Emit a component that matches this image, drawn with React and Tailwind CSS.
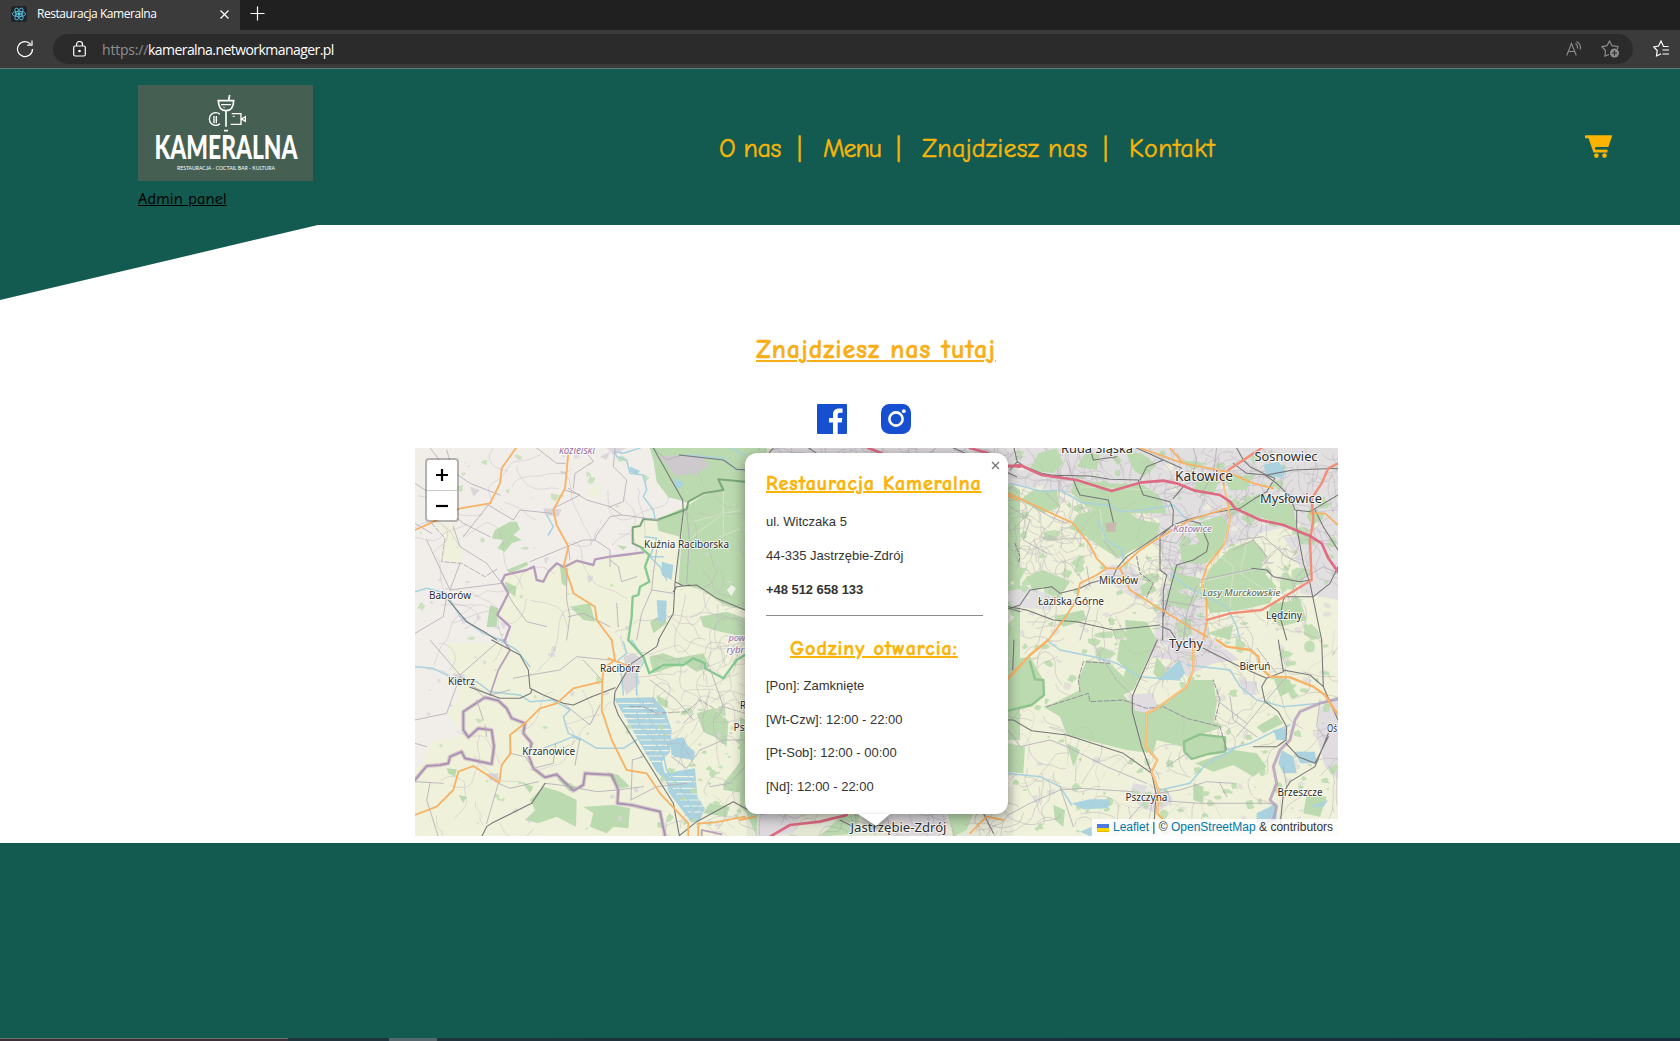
import React from "react";

const comic = "font-['Comic_Sans_MS','Comic_Neue','Open_Sans',sans-serif]";

/* ---------- seeded texture for fields, lanes and small woods ---------- */
function makeRandom(seed) {
  let s = seed;
  return () => {
    s = (s * 1664525 + 1013904223) % 4294967296;
    return s / 4294967296;
  };
}

function lanes(seed, count, x0, y0, w, h, step) {
  const r = makeRandom(seed);
  let d = "";
  for (let i = 0; i < count; i++) {
    let x = x0 + r() * w;
    let y = y0 + r() * h;
    let a = r() * 6.28;
    d += `M${x.toFixed(1)} ${y.toFixed(1)}`;
    const n = 4 + Math.floor(r() * 6);
    for (let k = 0; k < n; k++) {
      a += (r() - 0.5) * 2;
      const nx = x + Math.cos(a) * step * (0.5 + r());
      const ny = y + Math.sin(a) * step * (0.5 + r());
      d += `Q${x.toFixed(1)} ${y.toFixed(1)} ${((x + nx) / 2).toFixed(1)} ${((y + ny) / 2).toFixed(1)}`;
      x = nx;
      y = ny;
    }
  }
  return d;
}

function patches(seed, count, x0, y0, w, h, size) {
  const r = makeRandom(seed);
  let d = "";
  for (let i = 0; i < count; i++) {
    const cx = x0 + r() * w;
    const cy = y0 + r() * h;
    const R = size * (0.3 + r());
    const tilt = 0.4 + r() * 0.8;
    for (let k = 0; k < 9; k++) {
      const a = (k / 9) * 6.28;
      const q = R * (0.45 + r() * 0.75);
      d += `${k ? "L" : "M"}${(cx + Math.cos(a) * q).toFixed(1)} ${(cy + Math.sin(a) * q * tilt).toFixed(1)}`;
    }
    d += "Z";
  }
  return d;
}

const NW = "translate(410 440) scale(.33333)";
const SW = "translate(410 640) scale(.33333)";
const MID = "translate(740 440) scale(.33333)";
const NE = "translate(1000 440) scale(.33333)";
const SE = "translate(1000 640) scale(.33333)";

const labels = [
  ["koźielski", 577, 453.5, 36, 10, "i"],
  ["Kuźnia Raciborska", 686.5, 548, 85, 10],
  ["Baborów", 450, 598.5, 42, 10],
  ["Kietrz", 461.5, 685, 27, 10],
  ["Racibórz", 620, 672, 40, 10],
  ["Krzanowice", 548.7, 755, 53, 10],
  ["pow", 737, 641, 17, 9.5, "i"],
  ["rybr", 735.5, 653, 18, 9.5, "i"],
  ["R", 743, 709, 6, 10],
  ["Ps", 739, 731, 11, 10],
  ["Jastrzębie-Zdrój", 898.5, 832, 96, 12.5],
  ["Ruda Śląska", 1097, 453, 72, 12.5],
  ["Katowice", 1204, 481, 58, 13.5],
  ["Sosnowiec", 1286, 460.5, 63, 12.5],
  ["Mysłowice", 1291, 502.5, 62, 12.5],
  ["Katowice", 1192.5, 532, 39, 9.5, "i"],
  ["Mikołów", 1118.6, 583.5, 39, 10],
  ["Łaziska Górne", 1071, 605, 66, 10],
  ["Lasy Murckowskie", 1241.5, 596, 78, 9.5, "g"],
  ["Lędziny", 1284, 619, 36, 10],
  ["Tychy", 1186, 647.5, 34, 13],
  ["Bieruń", 1255, 669.5, 31, 10],
  ["Oś", 1332, 732, 10, 10],
  ["Pszczyna", 1146.5, 801, 42, 10],
  ["Brzeszcze", 1300, 796, 45, 10],
];

function MapDrawing() {
  return (
    <svg className="block h-full w-full" viewBox="415 448 923 388" fill="none" strokeLinejoin="round" strokeLinecap="round">
      <rect x="415" y="448" width="923" height="388" fill="#eff1da" />

      {/* land cover */}
      <g transform={NW}>
        <path fill="#f1eee9" d="M0 0H900L830 190 740 240 700 240 668 260 665 300 700 335 600 350 550 370 490 362 440 375 385 425 370 385 285 405 275 430 295 465 262 530 295 560 300 610H0Z" />
        <path fill="#eff1da" d="M80 250L130 255 155 340 150 370 95 360 105 290ZM540 145L575 135 570 165 540 172Z" />
        <path fill="#bbdaaf" d="M718 20H1010V125L925 118 940 150 880 160 830 188 800 178 775 172 740 125 730 60ZM740 240L820 203 800 425 815 292 745 272ZM822 205L880 165 940 150 925 118 1010 125V512L940 495 880 450 805 432Z" />
        <path fill="#cdc9cd" d="M745 48L870 45 900 75 850 108 845 98 800 110 760 62Z" />
        <path fill="#bbdaaf" d="M255 270L300 245 320 245 330 268 310 285 335 300 305 310 285 335 262 325 280 300 245 295ZM240 495L265 505 260 560 230 562ZM285 425L320 440 315 470 290 450ZM450 380L475 385 470 440 455 430ZM720 545L760 520 770 550 730 580ZM870 530L950 515 1005 535V590L930 575 880 560ZM620 315L650 320 640 330ZM480 500L540 490 555 545 520 540ZM290 390L350 365 355 375 300 400Z" />
        <path fill="#aad3df" d="M755 365L790 375 785 420 755 405ZM740 480L770 482 768 540 745 550ZM790 115L825 130 800 150ZM660 80L690 92 680 105 660 95Z" />
        <path fill="#dad6da" d="M180 140L210 150 190 170ZM400 205L455 208 445 230 405 225ZM590 24L650 24 610 45ZM570 50L600 35 590 60Z" />
        <path fill="#fbf8f5" opacity=".8" d="M950 450L965 435 978 445 965 468Z" />
        <path stroke="#d3e6c6" strokeWidth="3" d="M940 155V280M835 300L940 220 1000 210M850 245L940 220M930 290L1005 260" />
      </g>
      <g transform={SW}>
        <path fill="#f1eee9" d="M0 0H110L130 105 150 170 110 220 165 280 60 310 40 370 0 410Z" />
        <path fill="#bbdaaf" d="M360 480L400 440 450 455 500 480 498 560 440 530 385 550 345 540 375 510ZM335 425L370 440 360 460ZM440 415L500 440 480 455ZM520 500L610 495 660 505 655 565 610 560 590 580 540 560 550 520ZM590 395L625 405 660 440 630 445 605 420ZM860 220L910 205 955 245 950 320 915 290 880 275ZM718 50L760 40 800 55 880 40 900 80 860 95 820 70 730 100ZM940 430L1005 350V460L940 450ZM900 490L960 500 950 530 880 520ZM110 385L140 388 135 410 115 400ZM145 465L170 470 160 490ZM740 165L775 185 770 205 745 190Z" />
        <path fill="#aad3df" d="M612 175L730 172 765 210 785 270 780 335 755 365 765 400 855 385 862 470 885 505 870 540 845 548 775 455 770 425 740 395ZM800 290L855 335 850 360 790 350ZM780 300L820 292 850 350 785 345Z" />
        <path stroke="#eef4e4" strokeWidth="3.500" strokeDasharray="70 8 40 5" d="M625 190H730M640 205H740M640 220H755M645 236H765M655 252H775M665 268H780M675 284H782M690 300H780M700 316H778M708 332H775M715 348H768M725 364H752M780 410H850M775 425H855M790 445H855M800 462H860M810 480H865M820 498H880M835 516H875" />
        <path fill="#d9d6d9" d="M640 50L670 40 700 60 680 90 690 130 650 165 630 120 650 90ZM230 400L265 400 265 430 240 420ZM130 100L165 105 155 140 130 130Z" />
      </g>
      <g transform={MID}>
        <rect x="20" y="20" width="800" height="1190" fill="#e4e6d4" />
        <path fill="#bbdaaf" d="M0 20H80V400L0 390ZM0 830L60 870 50 1190 20 1120 0 1100ZM795 120L840 150V900H790ZM300 1130L360 1120 350 1180 240 1190ZM620 1110L700 1120 680 1170 640 1190Z" />
        <path fill="#dcd8dc" d="M100 20H800V60H100ZM60 1120L180 1130 160 1180 50 1190ZM420 1120H620V1190H440Z" />
      </g>
      <g transform={NE}>
        <path fill="#e2dfe0" d="M0 20H1014V330L960 320 900 250 780 280 690 320 540 400 460 300 480 240 300 170 0 130ZM480 300L610 300 620 420 500 420ZM300 370L400 380 450 460 410 480 330 430ZM490 430L620 470 620 600H460ZM850 290H1014V480L900 460 900 380ZM0 460L90 440 180 480 150 510 40 500Z" />
      </g>
      <g transform={SE}>
        <path fill="#e0dcdf" d="M430 0H640L720 60 640 70 560 110 520 60 440 50ZM380 165L460 160 475 210 410 220ZM720 120L770 125 770 165 730 165ZM960 200L1014 180V420L975 380 950 290ZM400 430L500 450 520 480 470 520 420 500 390 460ZM280 20L340 30 330 70 290 60Z" />
      </g>

      {/* small woods and settlements */}
      <path fill="#dad6da" opacity=".6" d={patches(83, 130, 1008, 450, 328, 384, 4.500)} />
      <path fill="#f0efdd" opacity=".8" d={patches(44, 120, 1008, 450, 328, 384, 5)} />
      <path fill="#c3deb3" opacity=".8" d={patches(7, 60, 420, 452, 325, 378, 3.500)} />
      <path fill="#bddcb0" opacity=".9" d={patches(31, 40, 650, 700, 95, 134, 4)} />
      <path fill="#bddcb0" opacity=".9" d={patches(19, 240, 1008, 450, 328, 384, 4.500) + patches(77, 50, 1010, 455, 326, 200, 9)} />
      <path fill="#d9d4dc" opacity=".75" d={patches(57, 60, 420, 455, 325, 378, 3)} />
      <g stroke="#b3acb6" strokeWidth=".6" opacity=".75">
        <path d={lanes(23, 190, 1008, 448, 330, 388, 8)} />
        <path d={lanes(29, 230, 1010, 448, 328, 120, 6)} />
        <path d={lanes(91, 60, 1160, 560, 60, 90, 6)} />
      </g>

      {/* large woods of the eastern part */}
      <g transform={NE}>
        <path fill="#bbdaaf" d="M115 40L170 25 190 70 160 100 90 90ZM260 35L300 45 290 90 230 80ZM220 120L330 130 430 135 480 170 500 220 400 220 260 200 215 160ZM100 150L170 150 180 200 130 220 60 180ZM380 40L425 40 470 75 430 110 400 90ZM280 210L360 200 420 240 480 250 470 300 400 330 355 355 300 320 260 290 210 265 230 225ZM575 255L665 225 685 260 665 320 620 370 545 370 540 320 600 310ZM625 390L690 325 760 300 790 330 785 390 830 440 810 490 720 510 630 520 605 450ZM700 200L780 160 880 200 890 270 790 235ZM525 400L600 415 600 440 540 450 505 420ZM80 410L130 390 210 425 190 455 130 440 100 455ZM160 530L250 510 260 540 190 560ZM500 450L590 470 560 510 500 490ZM420 440L450 420 470 450 430 470ZM820 490L900 480 920 540 840 560 800 520ZM30 380L80 385 60 420 30 420ZM375 540L440 545 470 600 380 600ZM620 580L700 555 690 600ZM930 200L960 230 940 260 920 230ZM600 110L660 120 640 160 580 150ZM670 110L760 105 740 150 690 150ZM540 60L620 70 580 90Z" />
        <path fill="#c7b9ad" d="M315 250L350 245 345 275 320 275Z" />
        <path fill="#aad3df" d="M790 75L835 65 860 95 845 115 800 105Z" />
        <path stroke="#dfe9cf" strokeWidth="2" d="M625 420L780 385M650 340L700 380 690 500M740 310L720 400 810 460M300 210L310 300M240 140L450 150" />
      </g>
      <g transform={SE}>
        <path fill="#bbdaaf" d="M160 190L240 150 235 120 260 60 330 70 370 110 410 0H470L400 150 370 165 390 185 270 180 440 210 500 190 580 120 640 120 650 190 640 245 670 260 600 285 550 320 470 300 460 340 380 330 200 285 180 230 130 200ZM360 0H470L400 110 350 60ZM400 180L440 215 470 300 380 330 240 290 250 175ZM24 60L90 50 130 120 130 170 90 200 24 215ZM24 310L75 320 70 400 24 395ZM585 370L700 330 770 340 800 380 760 410 700 375 640 395ZM200 310L240 330 220 380ZM770 260L830 225 850 250 790 280ZM820 110L870 120 880 150 840 170ZM920 465L980 470 960 530 910 520ZM470 50L500 90 480 120 460 100ZM580 430L610 440 610 490 580 480ZM160 495L195 510 190 560 165 540Z" />
        <path fill="#e0dcdf" d="M395 165L450 160 472 205 440 218 405 212Z" />
        <path fill="#aad3df" d="M475 120L505 90 540 60 555 100 540 118ZM215 490L270 478 330 478 325 505 250 508ZM845 330L880 350 890 400 850 400 835 370ZM885 335L945 335 950 370 900 370ZM820 270L860 265 855 300 830 300ZM770 520L830 490 830 545 770 550ZM930 500L985 480 970 500ZM240 575L275 560V590Z" />
        <path fill="#bbdaaf" stroke="#8fc58d" strokeWidth="7" d="M552 305L600 283 675 292 675 335 625 342 575 357 553 335Z" />
        <path stroke="#8fc58d" strokeWidth="7" d="M24 212L95 195 132 165 130 120 105 118 90 65" />
      </g>

      {/* minor lanes */}
      <path stroke="#c1b8c4" strokeWidth=".6" opacity=".7" d={lanes(3, 55, 415, 448, 330, 388, 11)} />
      <path stroke="#b8b0bb" strokeWidth=".6" opacity=".7" d={lanes(11, 60, 660, 590, 88, 246, 8)} />
      <path stroke="#b3acb6" strokeWidth=".5" opacity=".4" d={lanes(53, 50, 1008, 448, 330, 388, 8)} />
      <path stroke="#a39ca6" strokeWidth=".6" opacity=".7" d={lanes(61, 40, 745, 448, 263, 8, 6) + lanes(67, 50, 745, 810, 263, 26, 7)} />

      {/* waterways */}
      <g stroke="#a9d2df" strokeWidth="4.500">
        <path transform={NW} d="M690 24L640 40 615 35 620 50 650 60 660 100 700 105 710 150 700 170 730 210 735 235M960 24L1005 45M820 45L940 55 980 90 1005 88M15 455L50 445 110 460 150 530 220 580 290 605M410 225L430 260 415 285M720 350L750 380 770 420M705 290L740 295 720 350 760 350" />
        <path transform={SW} d="M15 80L70 85 130 115 200 125 240 155 330 165 360 185 430 180 480 210 460 230 475 280 510 295 560 325 640 325 680 300M400 325L440 310 490 290 510 300M270 0L320 30 360 80M640 5L650 40 625 60 635 110 640 165M665 0L705 60 680 100 680 165M680 215L690 260 730 300 760 345 770 390 830 470 860 540" />
        <path transform={NE} d="M30 130L130 155 180 150 250 190 330 195 360 215 430 210 520 195 560 240M295 240L320 300 365 330 370 365M510 400L560 440 600 460 680 500 710 560 720 600" />
        <path transform={SE} d="M140 0L180 30 280 50 350 70 420 110 540 120M560 75L690 90 720 140 770 180 850 200 960 190 1014 180M680 330L750 310 820 275 870 255M20 400L120 410 180 440 215 495M480 450L570 430 620 370 700 330" />
      </g>

      {/* boundaries */}
      <g stroke="#b79dbb" strokeWidth="9">
        <path strokeWidth="7" transform={NW} d="M700 337L640 345 600 350 555 358 550 375 500 362 462 382 440 370 415 395 400 425 380 420 372 380 350 390 285 405 275 425 295 460 262 525 300 560 285 600" />
        <path transform={SW} strokeWidth="12" opacity=".5" d="M15 420L50 378 90 375 115 370 120 350 155 335 165 355 245 372 252 320 245 270 205 265 175 292 160 270 160 215 225 172 265 182 290 205 305 235 345 250 340 280 365 310 355 345 370 385 405 412 440 403 490 452 520 435 525 400 605 405 625 450 622 490 665 495 750 515 765 587" />
        <path transform={SW} strokeWidth="5" stroke="#a98db0" d="M15 420L50 378 90 375 115 370 120 350 155 335 165 355 245 372 252 320 245 270 205 265 175 292 160 270 160 215 225 172 265 182 290 205 305 235 345 250 340 280 365 310 355 345 370 385 405 412 440 403 490 452 520 435 525 400 605 405 625 450 622 490 665 495 750 515 765 587" />
        <path transform={SW} strokeWidth="5" d="M240 165L265 90 300 30 280 0M875 590V570L935 583" />
        <path transform={SE} strokeWidth="9" opacity=".8" d="M1014 175L960 190 900 215 885 240 870 300 840 330 820 380 830 430 810 480 830 500 820 540 780 555" />
        <path transform={NE} strokeWidth="3" strokeDasharray="10 6" stroke="#8d808f" d="M45 310L60 350 55 370M410 350L420 400 460 430 440 470" />
      </g>
      <g strokeWidth="2.500" stroke="#8b7f93" strokeDasharray="14 6">
        <path transform={NW} opacity=".65" d="M65 250L105 295 95 365 155 370 225 410 265 385" />
        <path transform={SE} d="M140 200L265 160 270 185 370 180 440 205 490 200 560 235 660 260 680 330M240 155L235 120 250 65 330 70M645 240L660 180 640 120" />
        <path transform={SW} opacity=".7" d="M660 200L700 200 740 220 830 215 870 180 920 210" />
      </g>
      <g>
        <path transform={NW} stroke="#7ba77c" strokeWidth="6" d="M1005 125L925 118 940 150 880 160 835 185 830 208 740 240 700 237 690 258 668 262 668 310 700 325" />
        <path transform={NW} stroke="#86c993" strokeWidth="7" d="M695 325L718 345 705 380 718 425 690 440 685 465 668 470 665 530 655 600" />
        <path transform={SW} stroke="#86c993" strokeWidth="7" d="M655 0L700 50 718 100 760 75 820 75 850 55 885 70 885 85 940 115 980 60 1005 45" />
      </g>

      {/* secondary roads */}
      <g stroke="#b5adb8" strokeWidth="2.500">
        <path transform={NW} d="M15 130L60 160M60 24L100 75 180 130 270 165M90 190L160 250 240 290M130 260L150 320 230 370 275 430M275 430L120 450 50 300M235 195L310 240 330 210 425 220M235 195L160 290M475 145L530 180 600 200 635 225 750 240M520 24L550 65 495 100 490 145M615 24L610 80 650 120 640 185 600 200M465 150L510 165 430 205M380 24L440 70 465 70M635 225L600 230 560 285 555 300 600 330V380M555 300L520 300 470 320 360 365M475 320L480 360M275 430L310 490 350 545 410 560M470 400L470 480 480 530M600 360L625 380 635 425 680 410M730 24L770 60 815 45M150 370L120 450M740 330L730 400 725 450 695 520 680 600M830 210L838 300 830 430M725 450L790 460M15 580L100 530 110 470M475 530L520 520 600 560M480 530L470 600M620 490L625 560M110 30L125 80M15 250L65 280" />
        <path transform={SW} d="M60 0L150 105 270 0M150 110L190 140 230 180M150 110L110 220 15 240M190 140L240 165 300 150M360 105L450 90 500 50 600 60M360 105L310 115M460 190L540 255 570 195M200 180L220 240M300 340L345 350 370 385 430 370 437 310M300 340L300 285M230 290L225 255M15 425L100 430M265 430L230 550M265 430L300 445 385 425M667 360L663 480M667 360L700 350M405 430L450 435 560 455 620 450M663 480L740 440 830 430M520 60L575 120M15 310L50 320M495 375L510 295M620 450L700 440M85 590L50 480 60 430M1005 380L960 430 900 440M870 330L940 300 1005 300M900 85L940 200 1005 220M720 120L800 180 850 240M785 350L830 385 870 330M820 250L850 220" />
        <path transform={NE} d="M40 270L100 200 150 230 200 250M30 200L90 240 70 300 140 340M140 160L180 200 160 240M310 300L350 350M260 380L270 440M200 60L220 120M480 300L530 310 550 280M590 440L560 520 550 600M600 420L770 385M710 300L790 290 860 350 900 370M700 330L760 300 800 350M900 420L970 380 1014 400M220 480L270 500 240 600M580 24L590 60 570 130 500 150M650 24L640 100 600 170M480 480L600 500" />
        <path transform={SE} d="M24 270L60 320 150 300 200 320 320 380 440 430M24 525L90 490 180 450 240 445 400 455M180 440L220 560M310 60L350 120 400 170M770 24L830 100M860 110L800 180 710 290M650 180L740 250M690 170L700 240 770 290M700 430L620 425 540 450 470 460M460 480L600 490 820 490M660 430L680 470M850 380L860 440M960 180L950 260 980 300M340 590L420 500M500 380L560 340" />
      </g>

      {/* railways */}
      <g stroke="#777777" strokeWidth="3.200">
        <path transform={NW} d="M730 24L818 180 820 215 795 430 790 520 745 600M808 45L940 60 980 88 1005 90M795 425L820 438 860 435 920 475 1005 510M115 480L170 545 230 580 260 600M790 455L800 440 840 435" />
        <path transform={SW} d="M747 0L740 20 665 70 615 155 612 190 625 225 790 490 808 587 860 545 970 485 1015 510M245 0L330 45 355 90 360 145 400 165 460 190 490 195 545 170 615 143M365 150L362 160 330 175H270L180 142M405 430L365 490 245 550 230 560 215 590" />
        <path transform={NE} d="M42 24L52 65 75 80 125 100 220 118 230 145 240 165 325 180 340 245M52 65L30 90M130 105L270 108 330 118 415 120 420 140 430 165 510 185 520 210 518 255 480 290V390L500 405 490 450 488 600M410 24L490 60 440 80 420 120M550 140L520 175M490 60L545 85M350 385L380 350 440 310 520 255 560 240 640 218 720 205 765 175 800 155 825 115 800 105 740 100 700 70M560 240L600 250 625 310 620 335 580 360 530 375 515 430 490 530M710 24L730 60 750 80 800 105 880 90 1014 85M795 105L830 130 870 170 885 210 930 215 1014 165M890 210V260L910 370 930 430 965 600M945 210L970 260 1014 330M755 385L800 390 820 410 900 425 930 420M850 480L855 470 940 470 990 430 1014 380M350 385L340 410 270 430 240 445 180 460 155 440 90 450 60 495 30 505M25 500L80 510 160 540 230 545 340 570 480 555M270 24L280 60 350 50M850 480L840 530 860 600M485 560L510 570 530 600" />
        <path transform={SE} d="M472 0L405 150 397 170V215L425 320 455 400 468 460 463 540M24 240L40 240 95 272 200 285 370 340 455 400M610 25L720 80 800 115 850 95 835 0M850 90L930 105 970 140 965 0M800 115L785 140 795 185 835 215 860 260 858 300 830 320 760 320M858 310L895 350 945 370 985 290M985 280L945 380 870 425 850 460 840 560M970 140L1014 240M42 0L38 90" />
        <path transform={MID} d="M730 1120L760 1180M100 24L70 60M790 500L840 515M200 20L230 40M640 24L700 50 830 110M300 1140L340 1160" />
      </g>

      {/* main roads */}
      <g stroke="#f7b266" strokeWidth="5.500">
        <path transform={NW} d="M318 24L275 85 270 130 240 190 150 205 60 250 15 270M475 40L465 145 430 210 440 255 475 320 462 375 485 440 490 460 555 500 560 540 605 600" />
        <path transform={SW} d="M605 0L615 60 580 85 577 125 575 210 605 300 650 390 710 400 750 460 835 550V587M575 125L490 145 440 190 390 205 350 245 300 285 302 340 275 375 268 428 190 378 145 395 130 450 80 500 15 525M595 55L660 80M865 590V550L910 548 1005 530" />
        <path transform={NE} d="M25 160L90 190 220 250 270 315 290 355 320 385 360 385 420 330 500 280 570 240 680 205M320 385L290 405 240 430 230 480 190 540 145 600M360 385L390 450 470 500 560 555 620 590M510 24L550 70 420 24M550 70L680 95 760 130 820 145M665 95L672 140 685 200 690 240 675 310 620 380 605 430 620 480 620 545 610 600M930 220H975L1014 255" />
        <path transform={SE} strokeWidth="7" d="M145 0L90 45 24 115M580 0V90L560 140 470 205 440 220 437 320 472 360 455 395 475 450 472 520 490 540M650 0L680 20 750 30 775 50 780 80 810 110 870 112 940 140 975 165 1014 225" />
        <path transform={MID} d="M790 160L830 180M805 715L840 680M0 1140L45 1130M690 1180L740 1130 790 1140" />
      </g>
      <g stroke="#fbdca3" strokeWidth="2">
        <path transform={SE} d="M580 0V90L560 140 470 205 440 220 437 320 472 360 455 395 475 450 472 520" />
        <path transform={NE} d="M672 140L690 240 675 310 605 430 620 545" />
      </g>
      <g stroke="#f28d78" strokeWidth="7">
        <path transform={NE} d="M785 24L685 90M1014 70L985 85 965 130 935 175 940 240 930 300 935 420 870 460 785 510 690 520 620 540" />
      </g>
      <g stroke="#de6a84" strokeWidth="8">
        <path transform={NE} d="M20 80L60 75 125 105 230 120 335 153 420 128 490 122 530 130 585 152 660 165 690 185 705 205 780 240 850 255 930 288 965 310 985 355 1014 395" />
        <path transform={MID} d="M385 24L425 40M690 24L745 40M775 75L840 80M90 1190L150 1155 240 1145 320 1125" />
      </g>

      {/* place names */}
      <g textAnchor="middle" fontFamily="'Noto Sans','Open Sans',sans-serif" paintOrder="stroke" stroke="#ffffff" strokeOpacity=".75" strokeWidth="2">
        {labels.map(([name, x, y, len, size, kind], i) => (
          <text
            key={i}
            x={x}
            y={y}
            fontSize={size}
            textLength={len}
            lengthAdjust="spacingAndGlyphs"
            fill={kind === "i" ? "#9b72a3" : kind === "g" ? "#56664f" : "#2e2e2e"}
            fontStyle={kind ? "italic" : "normal"}
          >
            {name}
          </text>
        ))}
      </g>
    </svg>
  );
}

function Logo() {
  return (
    <svg className="block h-24 w-[175px] bg-[#465f53]" viewBox="138 85 175 96">
      <g transform="translate(130 80) scale(.33333)" fill="none" stroke="#fff" strokeWidth="5">
        <path d="M265 62H311Q310 92 288 92Q266 92 265 62ZM288 92V140M296 60L299 45M282 152H294" />
        <path strokeWidth="4" d="M273 74H303M270 103A19 19 0 1 0 270 131M252 108V130M259 108V130M305 101H333V133H302M335 117L346 110V124Z" />
        <path strokeWidth="3" d="M308 109H314M280 80L284 84" />
      </g>
      <text x="154.500" y="158.500" fill="#fff" fontFamily="Lato,sans-serif" fontWeight="900" fontSize="31.500" textLength="143" lengthAdjust="spacingAndGlyphs">KAMERALNA</text>
      <text x="177" y="170" fill="#fff" fontFamily="Lato,sans-serif" fontSize="6.500" textLength="98" lengthAdjust="spacingAndGlyphs">RESTAURACJA - COCTAIL BAR - KULTURA</text>
    </svg>
  );
}

function BrowserChrome() {
  return (
    <div className="h-[69px] shrink-0 border-b border-[#5c8078] bg-[#3b3b3b] font-['Segoe_UI','Open_Sans',sans-serif] text-white">
      <div className="flex h-[30px] bg-[#202020]">
        <div className="flex h-full w-[240px] items-center bg-[#3b3b3b] pb-[3px] pl-[11px] pr-[11px]">
          <svg className="h-4 w-4 rounded-xs bg-[#20242b]" viewBox="-12 -12 24 24" fill="none" stroke="#5ac8e4" strokeWidth="1.200">
            <circle r="2" fill="#5ac8e4" />
            <ellipse rx="10" ry="4" />
            <ellipse rx="10" ry="4" transform="rotate(60)" />
            <ellipse rx="10" ry="4" transform="rotate(120)" />
          </svg>
          <span className="ml-[10px] grow whitespace-nowrap text-[12px] tracking-[-0.45px]">Restauracja Kameralna</span>
          <svg className="mt-[2px] h-[9px] w-[9px]" viewBox="0 0 9 9" stroke="#fff" strokeWidth="1.200"><path d="M.5 .5L8.500 8.500M8.500 .5L.5 8.500" /></svg>
        </div>
        <svg className="ml-[10px] mt-[6px] h-[15px] w-[15px]" viewBox="0 0 15 15" stroke="#fff" strokeWidth="1.200"><path d="M7.500 .5V14.500M.5 7.500H14.500" /></svg>
      </div>
      <div className="flex h-[38px] items-center">
        <svg className="ml-4 h-[18px] w-[18px]" viewBox="0 0 18 18" fill="none" stroke="#fff" strokeWidth="1.200"><path d="M16.500 9A7.500 7.500 0 1 1 14.500 4M16 .5V5.200H11.200" /></svg>
        <div className="ml-[19px] flex h-[30px] w-[1580px] items-center rounded-full bg-[#2b2b2b]">
          <svg className="ml-5 h-4 w-[13px]" viewBox="0 0 13 16" fill="none" stroke="#fff" strokeWidth="1.200"><rect x=".7" y="5" width="11.600" height="10" rx="1.500" /><path d="M3.500 5V3.500A3 3 0 0 1 9.500 3.500V5" /><circle cx="6.500" cy="10" r=".7" fill="#fff" /></svg>
          <span className="ml-4 w-[46px] text-[14px] tracking-[-0.2px] text-[#8f8f8f]">https://</span>
          <span className="grow text-[14px] tracking-[-0.56px]">kameralna.networkmanager.pl</span>
          <svg className="mr-[19px] h-4 w-4" viewBox="0 0 16 16" fill="none" stroke="#8d8d8d" strokeWidth="1.100"><path d="M.7 14.500L5.500 2.500 10.300 14.500M2.300 10.500H8.700M9.500 2.500Q12 4 11.500 7.500M10.500 .5Q15.300 3 14.300 8.500" /></svg>
          <svg className="mr-[13px] h-[18px] w-[19px]" viewBox="0 0 19 18" fill="none" stroke="#8d8d8d" strokeWidth="1.200"><path d="M16.500 9L17 6.500 11 5.700 8.500 1 6 5.700 1 6.700 4.500 10.500 4 16 8 14.500" /><circle cx="13.500" cy="13" r="4.500" fill="#8d8d8d" stroke="none" /><path stroke="#2b2b2b" d="M13.500 10.500V15.500M11 13H16" /></svg>
        </div>
        <svg className="ml-5 h-[18px] w-4" viewBox="0 0 16 18" fill="none" stroke="#fff" strokeWidth="1.200"><path d="M15.500 6.500H10.500L8 1 5.500 6 .8 7 4.200 10.500 3.500 16 8 13.800M9.500 10H16M9.500 14H16" /></svg>
      </div>
    </div>
  );
}

function SiteHeader() {
  return (
    <header className={`flex h-[156px] shrink-0 bg-[#135b50] ${comic}`}>
      <div className="ml-[138px] mt-4 w-[581px]">
        <Logo />
        <a className="mt-[6px] block text-[16px] leading-6 tracking-[0.25px] text-black underline [-webkit-text-stroke:0.2px_#000]">Admin panel</a>
      </div>
      <nav className="mt-[62px] flex h-9 w-[866px] whitespace-nowrap text-[26px] leading-9 text-[#f5b50a] [-webkit-text-stroke:0.5px_#f5b50a]">
        <span className="w-[78px] tracking-[-0.4px]">O nas</span>
        <span className="w-[26px]">|</span>
        <span className="w-[73px] tracking-[-1.2px]">Menu</span>
        <span className="w-[26px]">|</span>
        <span className="w-[181px] tracking-[0.2px]">Znajdziesz nas</span>
        <span className="w-[26px]">|</span>
        <span className="tracking-[0.5px]">Kontakt</span>
      </nav>
      <svg className="mt-[65px] h-[26px] w-7" viewBox="0 0 28 26" fill="#fcb400"><path d="M1 1.200H26A1 1 0 0 1 27 2.600L23.300 13H11L10.300 15.500H22.500V18.500H8.500L3.500 4.200H1A1.500 1.500 0 0 1 1 1.200Z" /><path fill="#135b50" d="M10 13.500H23V15.300H10Z" /><circle cx="11.400" cy="21.600" r="2.300" /><circle cx="19.500" cy="21.600" r="2.300" /></svg>
    </header>
  );
}

function Popup() {
  const title = `${comic} whitespace-nowrap font-bold text-[#fab408] underline decoration-[1.5px] underline-offset-1 [-webkit-text-stroke:0.5px_#fab408]`;
  return (
    <div className="absolute left-[330px] top-[5px] h-[361px] w-[263px] rounded-xl bg-white px-[21px] font-['Liberation_Sans',Arial,sans-serif] text-[13px] text-[#333] shadow-[0_3px_14px_rgba(0,0,0,0.4)]">
      <div className="absolute left-[113px] top-[361px] h-3 w-9 drop-shadow-[0_3px_3px_rgba(0,0,0,0.4)]">
        <div className="h-3 w-8 bg-white [clip-path:polygon(0_0,100%_0,62%_88%,56%_100%,50%_88%)]" />
      </div>
      <svg className="absolute right-2 top-2 h-[9px] w-[9px]" viewBox="0 0 9 9" stroke="#757575" strokeWidth="1.300"><path d="M1 1L8 8M8 1L1 8" /></svg>
      <h2 className={`mt-[17px] h-[28px] text-[20px] leading-7 tracking-[0.9px] ${title}`}>Restauracja Kameralna</h2>
      <p className="mt-[14px] h-5 leading-5">ul. Witczaka 5</p>
      <p className="mt-[14px] h-5 leading-5">44-335 Jastrzębie-Zdrój</p>
      <p className="mt-[14px] h-5 font-bold leading-5 tracking-[-0.05px]">+48 512 658 133</p>
      <div className="mt-[15px] h-px w-[217px] bg-[#8c8c8c]" />
      <h2 className={`ml-6 mt-[19px] h-7 text-[20px] leading-7 tracking-[1px] ${title}`}>Godziny otwarcia:</h2>
      <p className="mt-[13px] h-5 leading-5">[Pon]: Zamknięte</p>
      <p className="mt-[14px] h-5 leading-5">[Wt-Czw]: 12:00 - 22:00</p>
      <p className="mt-[13px] h-5 leading-5">[Pt-Sob]: 12:00 - 00:00</p>
      <p className="mt-[14px] h-5 leading-5">[Nd]: 12:00 - 22:00</p>
    </div>
  );
}

function LeafletMap() {
  return (
    <div className="relative ml-[415px] mt-[14px] h-[388px] w-[923px] overflow-hidden">
      <MapDrawing />
      <div className="absolute left-[10px] top-[10px] flex h-16 w-[34px] flex-col rounded-sm border-2 border-black/25 bg-white bg-clip-padding text-black">
        <div className="flex h-[31px] items-center justify-center border-b border-[#ccc]"><svg className="h-3 w-3" viewBox="0 0 12 12" stroke="#000" strokeWidth="2.200"><path d="M6 0V12M0 6H12" /></svg></div>
        <div className="flex h-[29px] items-center justify-center"><svg className="h-3 w-3" viewBox="0 0 12 12" stroke="#000" strokeWidth="2.200"><path d="M0 6H12" /></svg></div>
      </div>
      <Popup />
      <div className="absolute bottom-0 right-0 flex h-[17px] w-[246px] items-center whitespace-nowrap bg-white/80 pl-[5px] font-['Liberation_Sans',Arial,sans-serif] text-[12px] leading-[17px] text-[#333]">
        <svg className="mr-1 h-2 w-3" viewBox="0 0 12 8"><path fill="#4c7be1" d="M0 0H12V4H0Z" /><path fill="#ffd500" d="M0 4H12V7H0Z" /><path fill="#e0bc00" d="M0 7H12V8H0Z" /></svg>
        <span><span className="text-[#0078a8]">Leaflet</span> | © <span className="text-[#0078a8]">OpenStreetMap</span> &amp; contributors</span>
      </div>
    </div>
  );
}

export default function App() {
  return (
    <div className="flex h-[1041px] w-full flex-col overflow-hidden bg-[#135b50]">
      <BrowserChrome />
      <SiteHeader />
      <main className="h-[618px] shrink-0 bg-white">
        <div className="h-[75px] w-[318px] bg-[#135b50] [clip-path:polygon(0_0,100%_0,0_100%)]" />
        <h1 className={`ml-[756px] mt-[30px] h-10 whitespace-nowrap text-[26px] font-semibold leading-10 tracking-[0.9px] text-[#f8ae17] underline decoration-2 underline-offset-2 [-webkit-text-stroke:0.4px_#f8ae17] ${comic}`}>Znajdziesz nas tutaj</h1>
        <div className="ml-[817px] mt-[34px] flex gap-[34px]">
          <svg className="h-[30px] w-[30px]" viewBox="0 0 30 30"><path fill="#164fd0" d="M1 0H29A1 1 0 0 1 30 1V29A1 1 0 0 1 29 30H1A1 1 0 0 1 0 29V1A1 1 0 0 1 1 0Z" /><path fill="#fff" d="M16 30V18.500H12V14H16V10.500C16 6.500 18.500 4.500 22 4.500H25.500V8.700H23C21.300 8.700 20.700 9.500 20.700 11V14H25.300L24.700 18.500H20.700V30Z" /></svg>
          <svg className="h-[30px] w-[30px]" viewBox="0 0 30 30"><rect width="30" height="30" rx="8.500" fill="#164fd0" /><circle cx="15" cy="15" r="6.600" fill="none" stroke="#fff" strokeWidth="2.600" /><circle cx="22.800" cy="7.200" r="1.900" fill="#fff" /></svg>
        </div>
        <LeafletMap />
      </main>
      <div className="mt-auto flex h-[3px] shrink-0 bg-linear-to-r from-[#20373c] to-[#1c2b3c]">
        <div className="w-[288px] border-t border-[#6f6f6d] bg-[#3c3038]" />
        <div className="ml-[101px] w-12 bg-[#55666d]" />
      </div>
    </div>
  );
}
